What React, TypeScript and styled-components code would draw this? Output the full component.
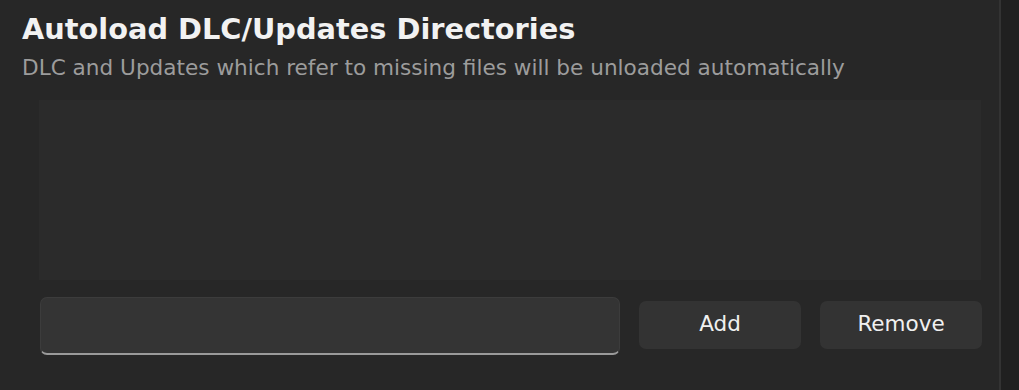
import React from "react";
import styled, { createGlobalStyle } from "styled-components";

const Global = createGlobalStyle`
  html, body { margin: 0; padding: 0; background: #272727; }
  body { font-family: "DejaVu Sans", "Noto Sans", sans-serif; }
  * { box-sizing: border-box; }
`;

const Window = styled.div`
  display: flex;
  width: 1019px;
  height: 390px;
  background: #272727;
  overflow: hidden;
`;

const Content = styled.div`
  flex: 1;
  min-width: 0;
  display: flex;
  flex-direction: column;
  padding: 12px 18px 0 22px;
`;

const Divider = styled.div`
  flex: 0 0 2px;
  background: #333333;
`;

const SideStrip = styled.div`
  flex: 0 0 18px;
  background: #202020;
`;

const Title = styled.h2`
  margin: 0 0 8px;
  font-size: 28.8px;
  font-weight: bold;
  color: #f2f2f2;
  line-height: 34px;
  white-space: nowrap;
`;

const Subtitle = styled.p`
  margin: 0;
  font-size: 21.6px;
  color: #9c9c9c;
  line-height: 28px;
  white-space: nowrap;
`;

const ListBox = styled.div`
  margin: 18px 0 0 17px;
  height: 180px;
  background: #2b2b2b;
`;

const Controls = styled.div`
  display: flex;
  align-items: center;
  gap: 19px;
  margin: 17px 0 0 18px;
`;

const Input = styled.input`
  flex: 0 0 580px;
  height: 58px;
  background: #343434;
  border: 1px solid #3c3c3c;
  border-bottom: 2px solid #9a9a9a;
  border-radius: 7px;
  color: #eee;
  font-family: inherit;
  font-size: 21px;
  padding: 0 12px;
  outline: none;
`;

const Button = styled.button`
  flex: 0 0 162px;
  height: 48px;
  margin-top: -2px;
  background: #333333;
  border: none;
  border-radius: 7px;
  color: #f0f0f0;
  font-family: inherit;
  font-size: 21.5px;
  padding: 0 0 3px;
  cursor: pointer;
`;

export default function App() {
  return (
    <>
      <Global />
      <Window>
        <Content>
          <Title>Autoload DLC/Updates Directories</Title>
          <Subtitle>DLC and Updates which refer to missing files will be unloaded automatically</Subtitle>
          <ListBox />
          <Controls>
            <Input />
            <Button>Add</Button>
            <Button>Remove</Button>
          </Controls>
        </Content>
        <Divider />
        <SideStrip />
      </Window>
    </>
  );
}
